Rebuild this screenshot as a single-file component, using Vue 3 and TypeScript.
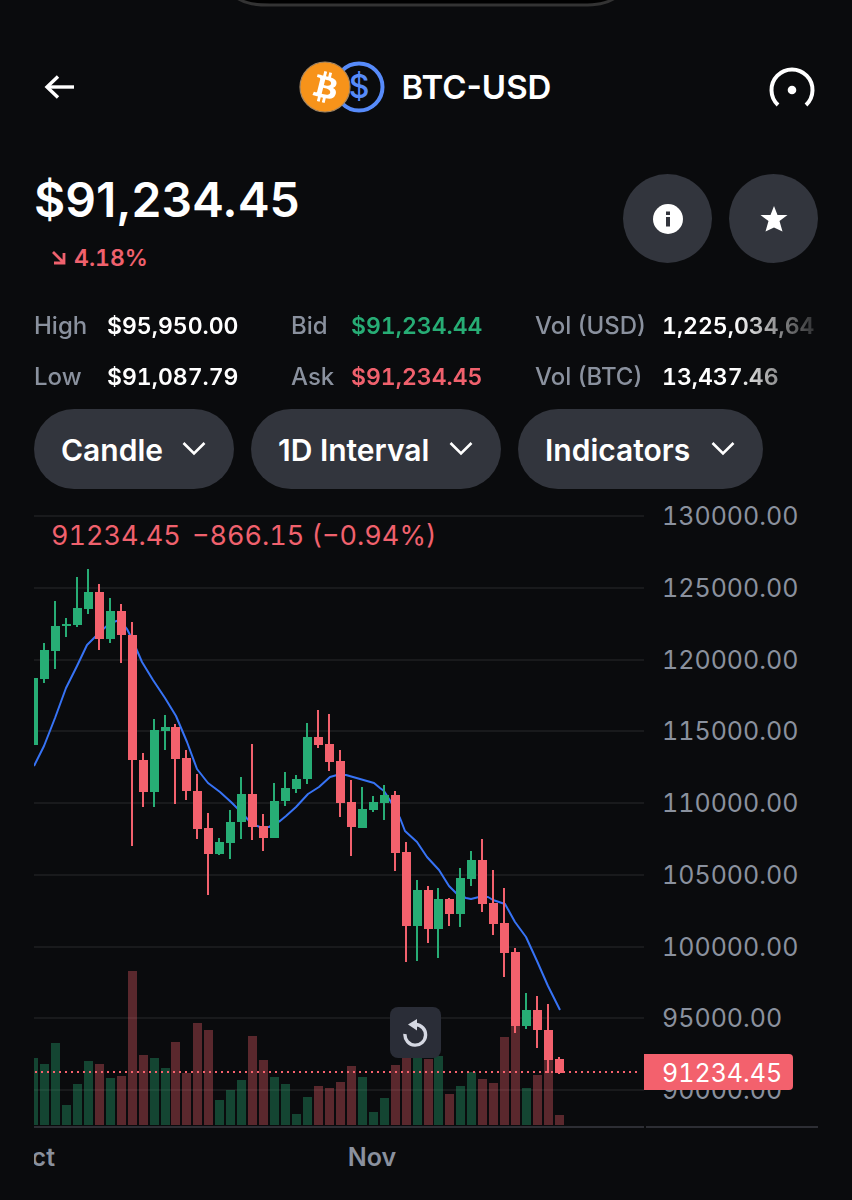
<script setup lang="ts">
import { ref } from 'vue'

type Candle = [up: number, top: number, bottom: number, high: number, low: number, volume: number]

const chartStyle = ref('Candle')
const interval = ref('1D Interval')
const indicator = ref('Indicators')

const menus = [
  { id: 'style', label: 'Chart style', model: chartStyle, options: ['Candle', 'Line'] },
  { id: 'interval', label: 'Chart interval', model: interval, options: ['1D Interval', '1H Interval'] },
  { id: 'indicators', label: 'Chart indicators', model: indicator, options: ['Indicators', 'EMA', 'RSI'] },
]

const stats = [
  { label: 'High', value: '$95,950.00', tone: 'plain' },
  { label: 'Bid', value: '$91,234.44', tone: 'gain' },
  { label: 'Vol (USD)', value: '1,225,034,64', tone: 'plain' },
  { label: 'Low', value: '$91,087.79', tone: 'plain' },
  { label: 'Ask', value: '$91,234.45', tone: 'loss' },
  { label: 'Vol (BTC)', value: '13,437.46', tone: 'plain' },
]

const prices = [130000, 125000, 120000, 115000, 110000, 105000, 100000, 95000, 90000].map((value, i) => ({
  label: value.toFixed(2),
  y: 516 + Math.round((i * 574) / 8),
}))

const volumeBase = 1125
const raw: Candle[] = [
  [1, 678, 745, 678, 745, 1058], [1, 650, 679, 643, 683, 1064], [1, 626, 651, 601, 669, 1043],
  [1, 624, 626, 618, 637, 1105], [1, 608, 625, 577, 627, 1084], [1, 592, 609, 569, 614, 1061],
  [0, 592, 639, 584, 650, 1064], [1, 611, 639, 598, 643, 1078], [0, 611, 635, 604, 663, 1076],
  [0, 635, 760, 622, 846, 971], [0, 760, 792, 753, 807, 1055], [1, 730, 792, 719, 807, 1058],
  [1, 727, 731, 715, 750, 1068], [0, 727, 759, 724, 804, 1042], [0, 758, 791, 750, 800, 1073],
  [0, 791, 829, 774, 839, 1023], [0, 828, 854, 813, 895, 1030], [1, 842, 854, 838, 855, 1100],
  [1, 822, 843, 810, 859, 1090], [1, 794, 822, 777, 839, 1080], [0, 794, 827, 744, 840, 1036],
  [0, 826, 838, 814, 851, 1060], [1, 801, 838, 783, 838, 1077], [1, 788, 801, 772, 806, 1084],
  [1, 779, 789, 775, 793, 1114], [1, 737, 779, 723, 784, 1097], [0, 737, 745, 710, 748, 1086],
  [0, 744, 762, 714, 771, 1088], [0, 761, 803, 750, 817, 1082], [0, 802, 827, 780, 856, 1066],
  [1, 809, 828, 787, 828, 1077], [1, 802, 810, 796, 812, 1112], [1, 795, 803, 785, 820, 1098],
  [0, 795, 853, 791, 871, 1065], [0, 852, 926, 842, 962, 1054], [1, 890, 926, 880, 961, 1054],
  [0, 890, 929, 886, 943, 1059], [1, 899, 929, 888, 958, 1056], [0, 899, 914, 898, 926, 1094],
  [1, 878, 914, 868, 927, 1086], [1, 860, 879, 851, 886, 1072], [0, 860, 904, 839, 912, 1079],
  [0, 903, 924, 870, 935, 1083], [0, 923, 953, 888, 977, 1037], [0, 952, 1026, 948, 1033, 1026],
  [1, 1010, 1026, 993, 1029, 1088], [0, 1010, 1030, 996, 1048, 1075], [0, 1030, 1060, 1004, 1073, 1060],
  [0, 1059, 1073, 1057, 1074, 1115],
]

const candles = raw.map(([up, top, bottom, high, low, volume], i) => ({
  x: 33 + Math.round((i * 526) / 48),
  tone: up ? 'gain' : 'loss',
  top,
  bottom,
  high,
  low,
  volume,
}))

const average =
  '34,766 44,746 55,718 66,688 77,666 87,645 99,633 110,623 120,620 127,629 132,639 142,662 153,680 ' +
  '165,698 176,716 187,742 197,769 208,783 220,792 231,802 241,812 252,824 260,827 269,827 280,821 ' +
  '286,816 296,807 308,794 319,787 330,777 337,775 346,775 360,779 374,783 380,788 384,791 391,802 ' +
  '400,818 405,831 417,842 427,857 439,870 449,886 457,894 466,898 471,899 479,897 488,897 493,900 ' +
  '505,904 515,922 526,937 537,961 548,986 560,1010'
</script>

<template>
  <div class="page">
    <svg class="island" viewBox="0 0 380 7" aria-hidden="true">
      <path d="M1 -2C10 4 20 5 34 5H346C360 5 370 4 379 -2" />
    </svg>

    <header class="topbar">
      <button class="icon-button back" aria-label="Back">
        <svg width="32" height="24" viewBox="0 0 32 24">
          <path d="M15 1.500L4 12L15 22.500" fill="none" stroke="#fff" stroke-width="3.400" />
          <path d="M4 12H31" stroke="#fff" stroke-width="3.400" />
        </svg>
      </button>
      <div class="pair">
        <svg width="86" height="52" viewBox="0 0 86 52" aria-hidden="true">
          <circle cx="60" cy="26" r="23.500" fill="#0a0b0d" stroke="#578bfa" stroke-width="4" />
          <text x="60" y="37" text-anchor="middle" class="dollar">$</text>
          <circle cx="26" cy="26" r="25" fill="#f7931a" stroke="#a58763" stroke-width="1.200" />
          <path
            transform="translate(0.400 0.400) scale(1.600)"
            fill="#fff"
            d="M23.189 14.020c.314-2.096-1.283-3.223-3.465-3.975l.708-2.840-1.728-.430-.690 2.765c-.454-.114-.920-.220-1.385-.326l.695-2.783L15.596 6l-.708 2.839c-.376-.086-.746-.170-1.104-.260l.002-.009-2.384-.595-.460 1.846s1.283.294 1.256.312c.700.175.826.638.805 1.006l-.806 3.235c.048.012.110.030.180.057l-.183-.045-1.130 4.532c-.086.212-.303.531-.793.410.018.025-1.256-.313-1.256-.313l-.858 1.978 2.250.561c.418.105.828.215 1.231.318l-.715 2.872 1.727.430.708-2.840c.472.127.930.245 1.378.357l-.706 2.828 1.728.430.715-2.866c2.948.558 5.164.333 6.097-2.333.752-2.146-.037-3.385-1.588-4.192 1.130-.260 1.980-1.003 2.207-2.538zm-3.950 5.538c-.533 2.147-4.148.986-5.320.695l.950-3.805c1.172.293 4.929.872 4.370 3.110zm.535-5.569c-.487 1.953-3.495.960-4.470.717l.860-3.450c.975.243 4.118.696 3.610 2.733z"
          />
        </svg>
        <h1>BTC-USD</h1>
      </div>
      <button class="icon-button gauge" aria-label="Advanced view">
        <svg width="48" height="50" viewBox="0 0 48 50">
          <path d="M10 43A20.500 20.500 0 1 1 38 43" fill="none" stroke="#fff" stroke-width="4" />
          <circle cx="24" cy="28" r="4.300" fill="#fff" />
        </svg>
      </button>
    </header>

    <main>
      <section class="quote">
        <div>
          <p class="price">$91,234.45</p>
          <p class="change">
            <svg width="14" height="14" viewBox="0 0 14 14" aria-hidden="true">
              <path d="M1 1L11 11M12 2V12H2" fill="none" stroke="currentColor" stroke-width="2.800" />
            </svg>
            4.18%
          </p>
        </div>
        <div class="actions">
          <button class="round" aria-label="Asset information">
            <svg width="30" height="30" viewBox="0 0 30 30">
              <circle cx="15" cy="15" r="15" fill="#fff" />
              <path d="M13 7.500h4v3.500h-4zM13 13h4v9.500h-4z" fill="#32353d" />
            </svg>
          </button>
          <button class="round" aria-label="Add to favourites">
            <svg width="28" height="28" viewBox="0 0 28 28">
              <path d="M14 1L17.500 10H27.500L19.500 16L22.500 26.500L14 22.500L5.500 26.500L8.500 16L0.500 10H10.500Z" fill="#fff" />
            </svg>
          </button>
        </div>
      </section>

      <dl class="stats">
        <template v-for="stat in stats" :key="stat.label">
          <dt>{{ stat.label }}</dt>
          <dd :class="stat.tone">{{ stat.value }}</dd>
        </template>
      </dl>

      <div class="menus">
        <div v-for="menu in menus" :key="menu.id" class="menu" :class="menu.id">
          <select v-model="menu.model.value" :aria-label="menu.label">
            <option v-for="option in menu.options" :key="option">{{ option }}</option>
          </select>
          <svg class="chevron" width="24" height="16" viewBox="0 0 24 16" aria-hidden="true">
            <path d="M1.500 2L12 12.500L22.500 2" fill="none" stroke="#fff" stroke-width="2.600" />
          </svg>
        </div>
      </div>

      <section class="chart">
        <svg viewBox="34 500 784 690" role="img" aria-label="BTC-USD daily candles">
          <defs>
            <clipPath id="plot"><rect x="34" y="500" width="610" height="690" /></clipPath>
          </defs>
          <g clip-path="url(#plot)">
            <g shape-rendering="crispEdges">
              <rect v-for="p in prices" :key="p.label" class="grid" x="34" :y="p.y - 1" width="610" height="2" />
              <rect
                v-for="c in candles"
                :key="c.x"
                class="volume"
                :class="c.tone"
                :x="c.x - 4"
                :y="c.volume"
                width="9"
                :height="volumeBase - c.volume"
              />
            </g>
            <polyline class="average" :points="average" />
            <g shape-rendering="crispEdges">
              <g v-for="c in candles" :key="c.x" class="candle" :class="c.tone">
                <rect :x="c.x - 1" :y="c.high" width="2" :height="c.low - c.high" />
                <rect :x="c.x - 4" :y="c.top" width="9" :height="c.bottom - c.top" />
              </g>
            </g>
            <line class="last" x1="35" x2="641" y1="1072" y2="1072" />
            <text class="month" x="55" y="1166" text-anchor="end">Oct</text>
            <text class="month" x="372" y="1166" text-anchor="middle">Nov</text>
          </g>
          <rect class="axis" x="34" y="1126" width="610" height="2" />
          <rect class="axis" x="646" y="1126" width="172" height="2" />
          <text class="legend" x="51" y="545">91234.45</text>
          <text class="legend" x="192" y="545">−866.15 (−0.94%)</text>
          <text v-for="p in prices" :key="p.label" class="tick" x="662" :y="p.y + 9">{{ p.label }}</text>
          <path class="tag" d="M644 1054H789Q793 1054 793 1058V1086Q793 1090 789 1090H644Z" />
          <text class="tick now" x="662" y="1082">91234.45</text>
        </svg>
        <button class="reset" aria-label="Reset chart">
          <svg width="26" height="28" viewBox="0 0 26 28">
            <path d="M3 15A10.300 10.300 0 1 0 13.500 5.500" fill="none" stroke="#d5d8e2" stroke-width="3.400" />
            <path d="M6 5.500L15 0V11.500Z" fill="#d5d8e2" />
          </svg>
        </button>
      </section>
    </main>
  </div>
</template>

<style>
html,
body {
  background: #0a0b0d;
}
</style>

<style scoped>
.page {
  padding: 0 34px;
  min-height: 100vh;
  box-sizing: border-box;
  overflow: hidden;
  background: #0a0b0d;
  color: #fff;
  font-family: Inter, 'Liberation Sans', sans-serif;
}

.island {
  display: block;
  width: 380px;
  height: 7px;
  margin: 0 auto;
}

.island path {
  fill: #000;
  stroke: #333;
  stroke-width: 3;
}

button {
  padding: 0;
  border: 0;
  color: inherit;
  cursor: pointer;
}

.topbar {
  display: grid;
  grid-template-columns: 1fr auto 1fr;
  align-items: center;
  margin-top: 54px;
  padding-right: 2px;
}

.icon-button {
  display: flex;
  background: none;
}

.back {
  margin-left: 9px;
}

.gauge {
  justify-self: end;
}

.pair {
  display: flex;
  align-items: center;
  gap: 17px;
}

h1,
p,
dl,
dd {
  margin: 0;
}

h1 {
  font-size: 33px;
  line-height: 52px;
  font-weight: 600;
}

.dollar {
  fill: #578bfa;
  font-size: 32px;
  font-weight: 500;
}

.quote {
  display: flex;
  justify-content: space-between;
  align-items: flex-start;
  margin-top: 61px;
}

.price {
  font-size: 48px;
  line-height: 52px;
  font-weight: 600;
}

.change {
  display: flex;
  align-items: center;
  gap: 8px;
  margin: 16px 0 0 18px;
  color: #f0616d;
  font-size: 23px;
  line-height: 32px;
  font-weight: 600;
  font-variant-numeric: tabular-nums;
}

.actions {
  display: flex;
  gap: 17px;
}

.round {
  display: flex;
  align-items: center;
  justify-content: center;
  width: 89px;
  height: 89px;
  border-radius: 50%;
  background: #32353d;
}

.stats {
  display: grid;
  grid-template-columns: 73px 184px 60px 184px 127px 1fr;
  row-gap: 19px;
  margin-top: 36px;
  font-size: 24px;
  line-height: 32px;
  font-weight: 500;
  white-space: nowrap;
  mask-image: linear-gradient(to right, #000 calc(100% - 84px), transparent calc(100% + 12px));
}

.stats dt {
  color: #8a919e;
}

.stats dd {
  font-size: 23px;
  font-weight: 600;
  font-variant-numeric: tabular-nums;
}

.stats .gain {
  color: #27ad75;
}

.stats .loss {
  color: #f0616d;
}

.menus {
  display: flex;
  gap: 17px;
  margin-top: 16px;
}

.menu {
  position: relative;
  width: 245px;
}

.menu.style {
  width: 200px;
}

.menu.interval {
  width: 250px;
}

select {
  appearance: none;
  width: 100%;
  height: 80px;
  padding: 2px 52px 0 27px;
  border: 0;
  border-radius: 40px;
  background: #32353d;
  color: #fff;
  font: 600 30px Inter, 'Liberation Sans', sans-serif;
}

.chevron {
  position: absolute;
  right: 28px;
  top: 32px;
  pointer-events: none;
}

.chart {
  position: relative;
  margin-top: 11px;
}

.chart > svg {
  display: block;
  width: 100%;
  font-variant-numeric: tabular-nums;
}

.grid {
  fill: #191a1c;
}

.axis {
  fill: #2d2e34;
}

.volume.gain {
  fill: #27ad75;
  opacity: 0.36;
}

.volume.loss {
  fill: #f6616d;
  opacity: 0.34;
}

.candle.gain {
  fill: #27ad75;
}

.candle.loss,
.tag {
  fill: #f3616d;
}

.average {
  fill: none;
  stroke: #3773f5;
  stroke-width: 2;
  stroke-linejoin: round;
}

.last {
  stroke: #f6616d;
  stroke-width: 2;
  stroke-dasharray: 2 4;
}

.legend {
  fill: #f0616d;
  font-size: 27px;
}

.tick {
  fill: #8a919e;
  font-size: 25px;
}

.tick.now {
  fill: #fff;
}

.month {
  fill: #8a919e;
  font-size: 25px;
  font-weight: 600;
}

.reset {
  position: absolute;
  left: 45.4%;
  top: 73.5%;
  display: flex;
  align-items: center;
  justify-content: center;
  width: 51px;
  height: 51px;
  border-radius: 8px;
  background: #2a2d37;
}
</style>
